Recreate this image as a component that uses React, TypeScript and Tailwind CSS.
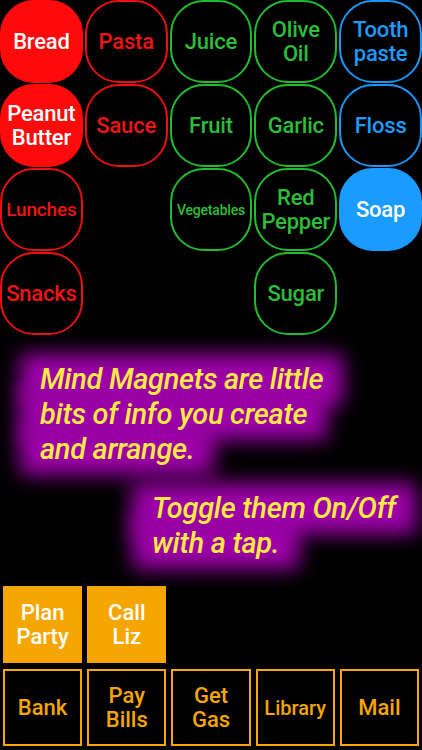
import React from 'react'

type Tone = 'red' | 'green' | 'blue'

interface Magnet {
  label: string[]
  tone: Tone
  on?: boolean
  size?: string
}

const toneClass: Record<Tone, { on: string; off: string }> = {
  red: { on: 'bg-[#ff0a0a] border-[#ff0a0a] text-white', off: 'border-[#e8110f] text-[#f01414]' },
  green: { on: 'bg-[#22b832] border-[#22b832] text-white', off: 'border-[#22bb30] text-[#2cbd3a]' },
  blue: { on: 'bg-[#1a9bff] border-[#1a9bff] text-white', off: 'border-[#1b96f7] text-[#1e9af9]' },
}

// null = empty slot in the grid
const magnets: (Magnet | null)[] = [
  { label: ['Bread'], tone: 'red', on: true },
  { label: ['Pasta'], tone: 'red' },
  { label: ['Juice'], tone: 'green' },
  { label: ['Olive', 'Oil'], tone: 'green' },
  { label: ['Tooth', 'paste'], tone: 'blue' },

  { label: ['Peanut', 'Butter'], tone: 'red', on: true },
  { label: ['Sauce'], tone: 'red' },
  { label: ['Fruit'], tone: 'green' },
  { label: ['Garlic'], tone: 'green' },
  { label: ['Floss'], tone: 'blue' },

  { label: ['Lunches'], tone: 'red', size: 'text-[19px]' },
  null,
  { label: ['Vegetables'], tone: 'green', size: 'text-[14px]' },
  { label: ['Red', 'Pepper'], tone: 'green' },
  { label: ['Soap'], tone: 'blue', on: true },

  { label: ['Snacks'], tone: 'red' },
  null,
  null,
  { label: ['Sugar'], tone: 'green' },
  null,
]

const tasks = [
  [
    { label: ['Plan', 'Party'], on: true },
    { label: ['Call', 'Liz'], on: true },
  ],
  [
    { label: ['Bank'] },
    { label: ['Pay', 'Bills'] },
    { label: ['Get', 'Gas'] },
    { label: ['Library'], size: 'text-[20px]' },
    { label: ['Mail'] },
  ],
] as { label: string[]; on?: boolean; size?: string }[][]

function GlowLine({ children }: { children: string }) {
  return (
    <div className="relative w-fit">
      {/* glow sits behind every line of the block */}
      <div className="absolute -z-10 -inset-x-[20px] -inset-y-[8px] bg-[#9e00aa] blur-[10px]" />
      <span>{children}</span>
    </div>
  )
}

export default function App() {
  return (
    <div className="w-[422px] h-[750px] bg-black overflow-hidden font-['Roboto','Liberation_Sans',sans-serif] font-medium">
      {/* magnet grid */}
      <div className="grid grid-cols-5 gap-x-[2px] gap-y-[1px] auto-rows-[83px]">
        {magnets.map((m, i) =>
          m ? (
            <div
              key={i}
              className={`flex flex-col items-center justify-center rounded-[34px] border-2 leading-[24px] tracking-[-0.2px] ${
                m.size ?? 'text-[22px]'
              } ${m.on ? toneClass[m.tone].on : toneClass[m.tone].off}`}
            >
              {m.label.map((l) => (
                <span key={l}>{l}</span>
              ))}
            </div>
          ) : (
            <div key={i} />
          ),
        )}
      </div>

      {/* hint text */}
      <div className="h-[251px] pt-[27px] text-[#ffea45] italic text-[29px] leading-[35px] tracking-[-0.3px]">
        <div className="isolate pl-[40px] flex flex-col">
          <GlowLine>Mind Magnets are little</GlowLine>
          <GlowLine>bits of info you create</GlowLine>
          <GlowLine>and arrange.</GlowLine>
        </div>
        <div className="isolate pl-[152px] mt-[24px] flex flex-col">
          <GlowLine>Toggle them On/Off</GlowLine>
          <GlowLine>with a tap.</GlowLine>
        </div>
      </div>

      {/* task row */}
      <div className="px-[3px] flex flex-col gap-[6px]">
        {tasks.map((row, r) => (
          <div key={r} className="grid grid-cols-5 gap-[5px]">
            {row.map((t) => (
              <div
                key={t.label.join()}
                className={`h-[77px] flex flex-col items-center justify-center border-2 border-[#f5a600] leading-[24px] ${
                  t.size ?? 'text-[22px]'
                } ${t.on ? 'bg-[#f5a600] text-white' : 'text-[#f5a600]'}`}
              >
                {t.label.map((l) => (
                  <span key={l}>{l}</span>
                ))}
              </div>
            ))}
          </div>
        ))}
      </div>
    </div>
  )
}
